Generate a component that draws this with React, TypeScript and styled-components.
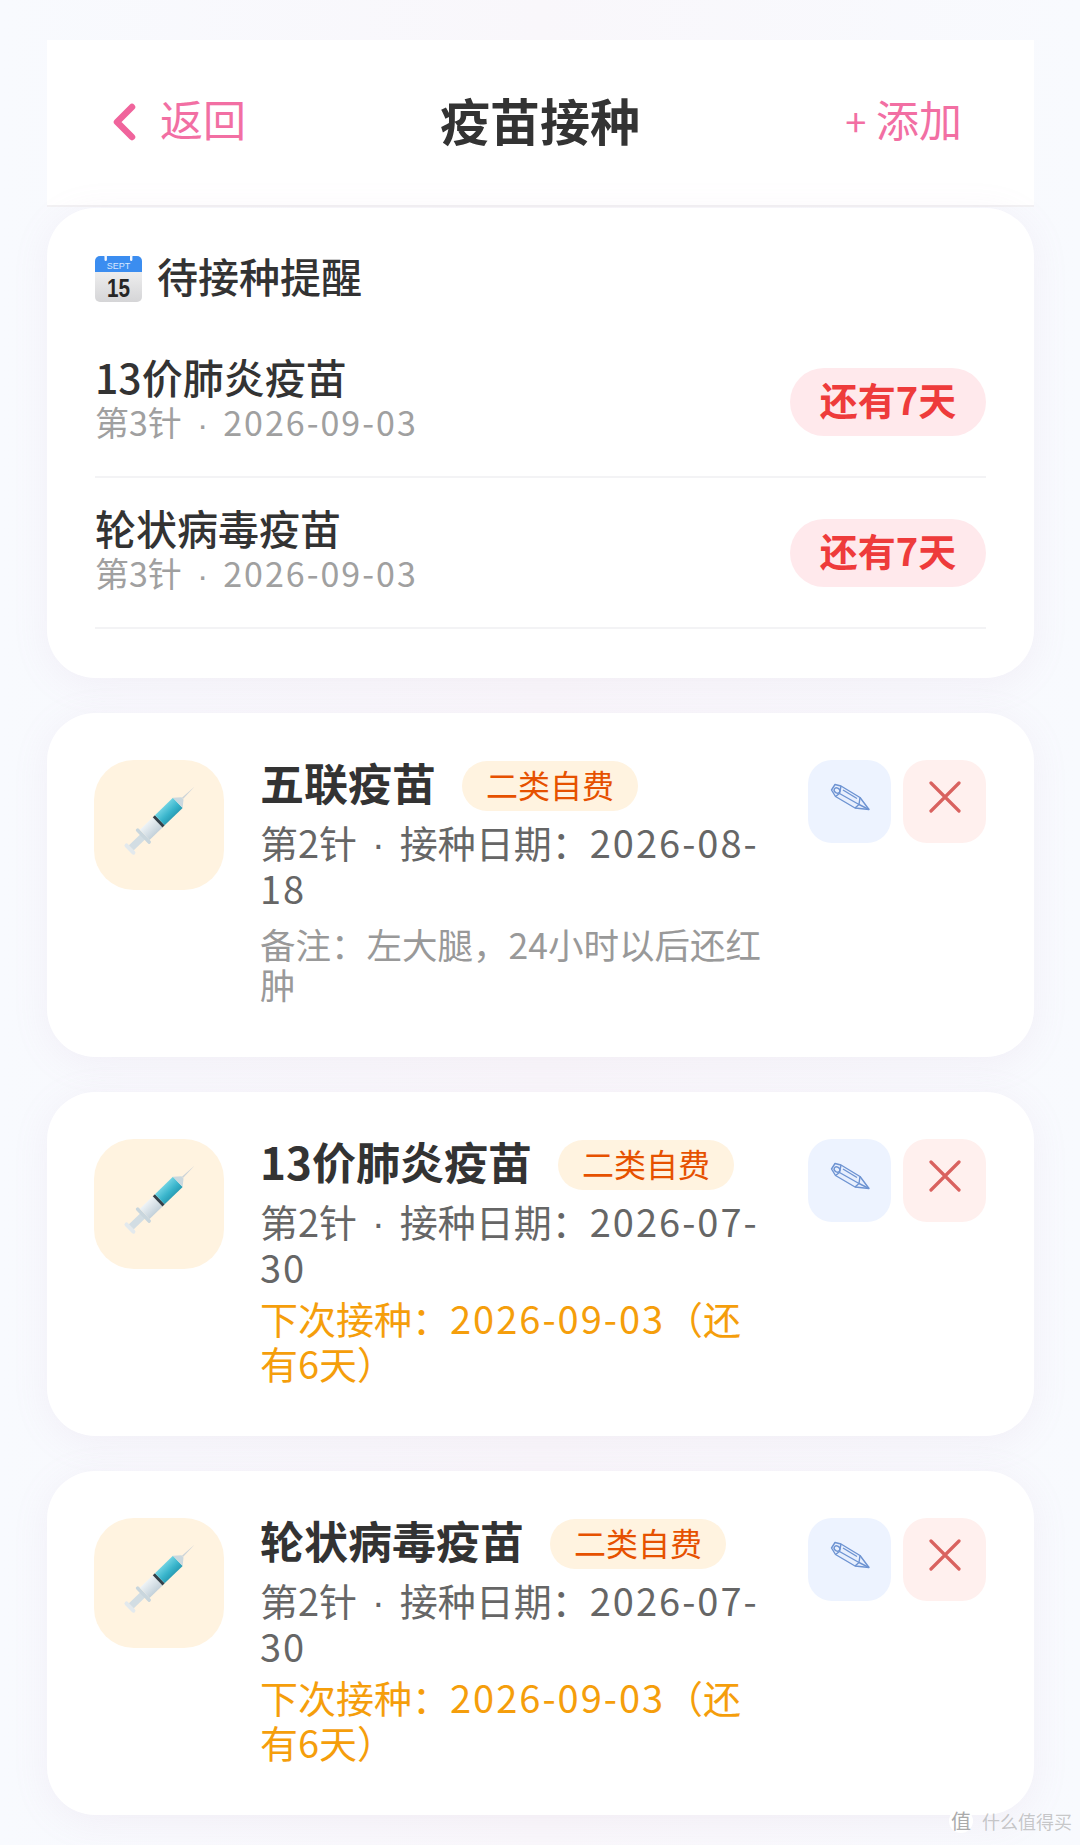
import { FC, ReactElement } from 'react';
import styled, { createGlobalStyle } from 'styled-components';

const reminders = [
  { name: '13价肺炎疫苗', dose: '第3针', date: '2026-09-03', left: '还有7天' },
  { name: '轮状病毒疫苗', dose: '第3针', date: '2026-09-03', left: '还有7天' },
];

const records = [
  { name: '五联疫苗', date: '2026-08-', dateEnd: '18', note: '备注\uFF1A左大腿\uFF0C24小时以后还红肿' },
  { name: '13价肺炎疫苗', date: '2026-07-', dateEnd: '30', next: '2026-09-03' },
  { name: '轮状病毒疫苗', date: '2026-07-', dateEnd: '30', next: '2026-09-03' },
];

const CalendarIcon: FC = () => (
  <svg width="47" height="47" viewBox="0 0 47 47">
    <defs>
      <linearGradient id="calBody" x1="0" y1="0" x2="0" y2="1">
        <stop offset="0" stopColor="#fafafa" />
        <stop offset="1" stopColor="#d5d5d7" />
      </linearGradient>
    </defs>
    <rect x="0" y="1" width="47" height="46" rx="5" fill="url(#calBody)" />
    <path d="M0 17V6a5 5 0 0 1 5-5h37a5 5 0 0 1 5 5v11z" fill="#3b8df0" />
    <rect x="9.500" y="0" width="2.400" height="6" rx="1.200" fill="#f4f8ff" />
    <rect x="35" y="0" width="2.400" height="6" rx="1.200" fill="#f4f8ff" />
    <text x="23.500" y="14" textAnchor="middle" fontSize="9" fill="#d8e8ff" fontFamily="Liberation Sans, sans-serif">
      SEPT
    </text>
    <text x="23.500" y="42" textAnchor="middle" fontSize="26" fontWeight="700" fill="#262626" textLength="23" lengthAdjust="spacingAndGlyphs" fontFamily="Liberation Sans, sans-serif">
      15
    </text>
  </svg>
);

const SyringeIcon: FC = () => (
  <svg width="130" height="130" viewBox="0 0 130 130">
    <defs>
      <linearGradient id="liquid" x1="0" y1="0" x2="0" y2="1">
        <stop offset="0" stopColor="#6ed2e2" />
        <stop offset="0.6" stopColor="#38b4cb" />
        <stop offset="1" stopColor="#2a9db5" />
      </linearGradient>
      <linearGradient id="glass" x1="0" y1="0" x2="0" y2="1">
        <stop offset="0" stopColor="#eef3f6" />
        <stop offset="1" stopColor="#c3d1da" />
      </linearGradient>
    </defs>
    <g transform="rotate(-44 64 62)">
      <rect x="23" y="55" width="4" height="14" rx="2" fill="#e3e9ed" />
      <rect x="27" y="58.500" width="17" height="7" fill="#d2dde3" />
      <rect x="42" y="52" width="3.500" height="20" rx="1.500" fill="#c9d6dd" />
      <rect x="45.500" y="55" width="18" height="14" fill="url(#glass)" />
      <rect x="63.500" y="55" width="3" height="14" fill="#33404a" />
      <rect x="66.500" y="55" width="25" height="14" fill="url(#liquid)" />
      <path d="M91.500 55L98 60.500V63.500L91.500 69z" fill="#cbd8de" />
      <path d="M98 61.200L115 62L98 62.800z" fill="#cdd4d8" />
    </g>
  </svg>
);

const PencilIcon: FC = () => (
  <svg width="40" height="28" viewBox="0 0 40 28" fill="none" stroke="#6d93d2" strokeWidth="1.400" strokeLinejoin="round">
    <path d="M5 1.500L11 3L30 14.500L39 26.500L25 25L5.500 13.500L1.500 7z" fill="#e8effd" />
    <ellipse cx="7" cy="7.500" rx="2.400" ry="3" transform="rotate(-60 7 7.500)" />
    <path d="M11 3L9.500 10.500L5.500 13.500M9.500 10.500L29 21.500L25 25M29 21.500L30 14.500M29 21.500L39 26.500" />
    <path d="M13 7L27 15.500" />
  </svg>
);

const CloseIcon: FC = () => (
  <svg width="32" height="32" viewBox="0 0 32 32" stroke="#d9625f" strokeWidth="3.200" strokeLinecap="round">
    <path d="M2 2L30 30M30 2L2 30" />
  </svg>
);

const App: FC = (): ReactElement => {
  return (
    <>
      <GlobalStyle />
      <Page>
        <Header>
          <BackLink>
            <svg width="24" height="38" viewBox="0 0 24 38" fill="none" stroke="#f0649c" strokeWidth="6.500" strokeLinecap="round" strokeLinejoin="round">
              <path d="M20 4L5 19L20 34" />
            </svg>
            返回
          </BackLink>
          <PageTitle>疫苗接种</PageTitle>
          <AddLink>
            <span>+</span> 添加
          </AddLink>
        </Header>

        <ReminderCard>
          <SectionTitle>
            <CalendarIcon />
            <SectionLabel>待接种提醒</SectionLabel>
          </SectionTitle>
          {reminders.map((item) => (
            <ReminderRow key={item.name}>
              <ReminderText>
                <ReminderName>{item.name}</ReminderName>
                <ReminderSub>
                  {item.dose}
                  <Dot>·</Dot>
                  <Digits>{item.date}</Digits>
                </ReminderSub>
              </ReminderText>
              <DaysBadge>{item.left}</DaysBadge>
            </ReminderRow>
          ))}
        </ReminderCard>

        {records.map((item) => (
          <RecordCard key={item.name}>
            <IconTile>
              <SyringeIcon />
            </IconTile>
            <RecordBody>
              <RecordHead>
                <RecordName>{item.name}</RecordName>
                <TypeTag>二类自费</TypeTag>
              </RecordHead>
              <Meta>
                第2针
                <Dot>·</Dot>
                {'接种日期\uFF1A'}
                <Digits>{item.date}</Digits>
                <wbr />
                <Digits>{item.dateEnd}</Digits>
              </Meta>
              {item.note && <Note>{item.note}</Note>}
              {item.next && (
                <NextDose>
                  {'下次接种\uFF1A'}
                  <Digits>{item.next}</Digits>
                  {'\uFF08还有6天\uFF09'}
                </NextDose>
              )}
            </RecordBody>
            <Actions>
              <ActionButton $tone="edit">
                <PencilIcon />
              </ActionButton>
              <ActionButton $tone="remove">
                <CloseIcon />
              </ActionButton>
            </Actions>
          </RecordCard>
        ))}

        <Watermark>
          <WatermarkBadge>值</WatermarkBadge>
          什么值得买
        </Watermark>
      </Page>
    </>
  );
};

const GlobalStyle = createGlobalStyle`
  html, body {
    margin: 0;
    padding: 0;
  }
  * {
    box-sizing: border-box;
  }
  body {
    background: #f8fafe;
    font-family: 'Noto Sans CJK SC', 'Noto Sans', sans-serif;
  }
`;

const Page = styled.div`
  position: relative;
  width: 1080px;
  height: 1845px;
  overflow: hidden;
  padding: 40px 46px 0 47px;
  background: linear-gradient(90deg, #f8fafe 0%, #f9f7fb 50%, #f8fafe 100%);
`;

const Header = styled.header`
  height: 167px;
  background: #fff;
  border-bottom: 2px solid #f2f1f3;
  display: grid;
  grid-template-columns: 1fr auto 1fr;
  align-items: center;
  padding: 0 72px 8px 65px;
`;

const BackLink = styled.div`
  display: flex;
  align-items: center;
  gap: 24px;
  color: #f26fa3;
  font-size: 43px;
  line-height: 1;

  svg {
    margin-top: 6px;
  }
`;

const PageTitle = styled.h1`
  margin: 0 0 0 6px;
  color: #333;
  font-size: 50px;
  font-weight: 700;
  line-height: 1;
`;

const AddLink = styled.div`
  justify-self: end;
  color: #f26fa3;
  font-size: 43px;
  line-height: 1;

  span {
    font-size: 38px;
  }
`;

const Card = styled.section`
  background: #fff;
  border-radius: 48px;
  box-shadow: 0 6px 36px rgba(190, 150, 190, 0.1);
`;

const ReminderCard = styled(Card)`
  margin-top: 1px;
  height: 470px;
  padding: 45px 48px 0;
`;

const SectionTitle = styled.h2`
  margin: 0 0 24px;
  display: flex;
  align-items: center;
  gap: 15px;
  height: 50px;
  color: #333;
  font-size: 41px;
  font-weight: 500;
  line-height: 1;
`;

const SectionLabel = styled.span`
  padding-bottom: 6px;
`;

const ReminderRow = styled.div`
  height: 151px;
  display: flex;
  align-items: center;
  justify-content: space-between;
  border-bottom: 2px solid #f3f3f5;
`;

const ReminderText = styled.div`
  padding-bottom: 5px;
`;

const ReminderName = styled.div`
  color: #333;
  font-size: 41px;
  font-weight: 500;
  line-height: 42px;
  padding-bottom: 4px;
`;

const ReminderSub = styled.div`
  color: #a0a0a0;
  font-size: 34px;
  line-height: 42px;
`;

const Digits = styled.span`
  letter-spacing: 2px;
`;

const Dot = styled.span`
  margin: 0 15px;
  font-family: 'Liberation Sans', sans-serif;
  line-height: 0;
`;

const DaysBadge = styled.div`
  height: 68px;
  width: 196px;
  border-radius: 34px;
  background: #ffe9ec;
  color: #ee3b3b;
  font-size: 38px;
  font-weight: 700;
  padding-bottom: 6px;
  display: flex;
  align-items: center;
  justify-content: center;
`;

const RecordCard = styled(Card)`
  margin-top: 35px;
  padding: 47px 48px 51px 47px;
  display: grid;
  grid-template-columns: 130px 1fr auto;
  align-items: start;
  column-gap: 36px;
`;

const IconTile = styled.div`
  width: 130px;
  height: 130px;
  border-radius: 40px;
  background: #fff3e0;
`;

const RecordBody = styled.div`
  min-width: 0;
  margin-top: 1px;
`;

const RecordHead = styled.div`
  display: flex;
  align-items: center;
  gap: 26px;
  height: 50px;
  margin-bottom: 8px;
`;

const RecordName = styled.div`
  color: #333;
  font-size: 44px;
  font-weight: 700;
  line-height: 1;
  padding-bottom: 8px;
`;

const TypeTag = styled.div`
  height: 50px;
  padding: 0 24px;
  border-radius: 25px;
  background: #fff3e0;
  color: #e65100;
  font-size: 32px;
  line-height: 47px;
  white-space: nowrap;
`;

const Meta = styled.div`
  color: #666;
  font-size: 38px;
  line-height: 46px;
`;

const Note = styled.div`
  margin: 13px 0 2px;
  color: #999;
  font-size: 35.5px;
  line-height: 40px;
`;

const NextDose = styled.div`
  margin-top: 5px;
  color: #f59e0b;
  font-size: 38px;
  line-height: 45px;
`;

const Actions = styled.div`
  display: flex;
  gap: 12px;
`;

const ActionButton = styled.div<{ $tone: 'edit' | 'remove' }>`
  width: 83px;
  height: 83px;
  border-radius: 24px;
  padding-bottom: 9px;
  display: flex;
  align-items: center;
  justify-content: center;
  background: ${({ $tone }) => ($tone === 'edit' ? '#edf3ff' : '#fff0ee')};
`;

const Watermark = styled.div`
  position: absolute;
  right: 8px;
  bottom: 12px;
  display: flex;
  align-items: center;
  gap: 9px;
  color: rgba(170, 170, 170, 0.65);
  font-size: 18px;
  line-height: 1;
`;

const WatermarkBadge = styled.span`
  width: 24px;
  height: 24px;
  border-radius: 50%;
  background: #fff;
  color: #aaa;
  font-size: 20px;
  display: flex;
  align-items: center;
  justify-content: center;
`;

export default App;
